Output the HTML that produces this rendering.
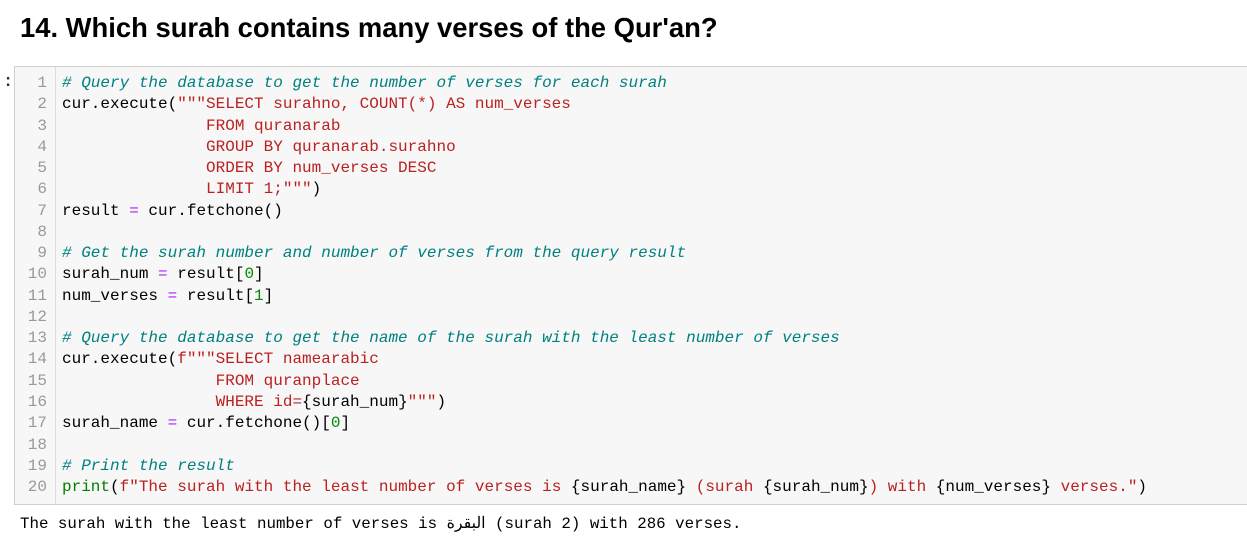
<!DOCTYPE html>
<html><head><meta charset="utf-8"><style>
body{margin:0;background:#fff;width:1247px;height:555px;overflow:hidden;position:relative;font-family:"Liberation Sans",sans-serif}
h1{position:absolute;left:20px;top:12px;margin:0;font-size:27.4px;font-weight:bold;color:#000}
.colon{position:absolute;left:3px;top:73px;font:bold 17px "Liberation Mono",monospace;color:#333}
.box{position:absolute;left:14px;top:66px;width:1240px;height:439px;background:#f7f7f7;border:1px solid #cfcfcf;box-sizing:border-box}
.gut{position:absolute;left:40px;top:0;bottom:0;border-left:1px solid #ddd}
pre{margin:0;font:16px/21.26px "Liberation Mono",monospace;position:absolute;top:6px}
.nums{left:0;width:32px;text-align:right;color:#999}
.code{left:47px;color:#000}
.c{color:#008080;font-style:italic}.s{color:#ba2121}.o{color:#aa22ff}.n{color:#080}.k{color:#008000}
.out{position:absolute;left:20px;top:513px;font:15.8px "Liberation Mono","Noto Sans CJK SC",monospace;color:#000;white-space:pre}
</style></head><body>
<h1>14. Which surah contains many verses of the Qur'an?</h1>
<div class="colon">:</div>
<div class="box"><div class="gut"></div>
<pre class="nums">1
2
3
4
5
6
7
8
9
10
11
12
13
14
15
16
17
18
19
20</pre>
<pre class="code"><span class="c"># Query the database to get the number of verses for each surah</span>
cur.execute(<span class="s">"""SELECT surahno, COUNT(*) AS num_verses</span>
<span class="s">               FROM quranarab</span>
<span class="s">               GROUP BY quranarab.surahno</span>
<span class="s">               ORDER BY num_verses DESC</span>
<span class="s">               LIMIT 1;"""</span>)
result <span class="o">=</span> cur.fetchone()

<span class="c"># Get the surah number and number of verses from the query result</span>
surah_num <span class="o">=</span> result[<span class="n">0</span>]
num_verses <span class="o">=</span> result[<span class="n">1</span>]

<span class="c"># Query the database to get the name of the surah with the least number of verses</span>
cur.execute(<span class="s">f"""SELECT namearabic</span>
<span class="s">                FROM quranplace</span>
<span class="s">                WHERE id=</span>{surah_num}<span class="s">"""</span>)
surah_name <span class="o">=</span> cur.fetchone()[<span class="n">0</span>]

<span class="c"># Print the result</span>
<span class="k">print</span>(<span class="s">f"The surah with the least number of verses is </span>{surah_name}<span class="s"> (surah </span>{surah_num}<span class="s">) with </span>{num_verses}<span class="s"> verses."</span>)</pre>
</div>
<div class="out">The surah with the least number of verses is البقرة (surah 2) with 286 verses.</div>
</body></html>
